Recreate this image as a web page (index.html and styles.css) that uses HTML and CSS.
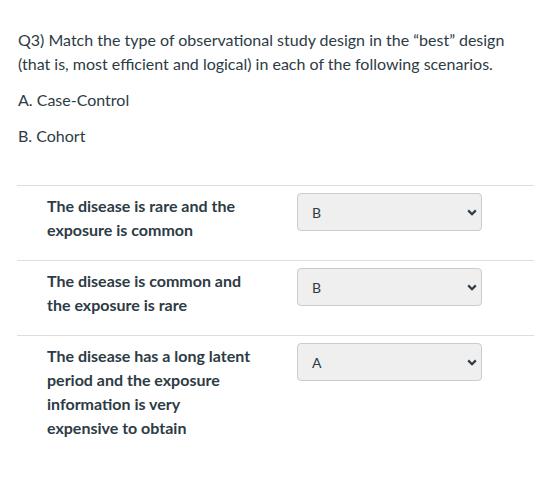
FILE: index.html
```html
<!DOCTYPE html>
<html lang="en">
<head>
<meta charset="utf-8">
<title>Q3</title>
<link rel="stylesheet" href="styles.css">
</head>
<body>
<div class="question">
  <div class="prompt">
    <p>Q3) Match the type of observational study design in the “best” design (that is, most efficient and logical) in each of the following scenarios.</p>
    <p>A. Case-Control</p>
    <p>B. Cohort</p>
  </div>
  <div class="answers">
    <div class="row">
      <div class="label">The disease is rare and the exposure is common</div>
      <div class="select-wrap">
        <select class="select"><option>B</option></select>
        <svg class="chev" width="10" height="7" viewBox="0 0 10 7"><path d="M1.2 1.4 L5 5.2 L8.8 1.4" fill="none" stroke="#2d3b45" stroke-width="2.2"/></svg>
      </div>
    </div>
    <div class="row">
      <div class="label">The disease is common and the exposure is rare</div>
      <div class="select-wrap">
        <select class="select"><option>B</option></select>
        <svg class="chev" width="10" height="7" viewBox="0 0 10 7"><path d="M1.2 1.4 L5 5.2 L8.8 1.4" fill="none" stroke="#2d3b45" stroke-width="2.2"/></svg>
      </div>
    </div>
    <div class="row">
      <div class="label">The disease has a long latent period and the exposure information is very expensive to obtain</div>
      <div class="select-wrap">
        <select class="select"><option>A</option></select>
        <svg class="chev" width="10" height="7" viewBox="0 0 10 7"><path d="M1.2 1.4 L5 5.2 L8.8 1.4" fill="none" stroke="#2d3b45" stroke-width="2.2"/></svg>
      </div>
    </div>
  </div>
</div>
</body>
</html>
```
FILE: styles.css
```css
html, body {
  margin: 0;
  padding: 0;
  background: #ffffff;
}
body {
  font-family: Lato, "Liberation Sans", sans-serif;
  color: #2d3b45;
  font-size: 16px;
  line-height: 24px;
}
.question {
  padding: 28px 15px 0 18px;
}
.prompt p {
  margin: 0 0 12px 0;
}
.answers {
  margin-top: 37px;
}
.row {
  display: flex;
  align-items: flex-start;
  border-top: 1px solid #dcdfe2;
  padding: 7px 0 18px 30px;
  margin-left: -1px;
}
.label {
  width: 205px;
  font-weight: bold;
  padding-top: 1px;
  flex: none;
}
.select-wrap {
  position: relative;
  margin-left: 45px;
  width: 185px;
  height: 38px;
}
.select {
  appearance: none;
  -webkit-appearance: none;
  box-sizing: border-box;
  width: 185px;
  height: 38px;
  margin: 0;
  padding: 0 0 0 14px;
  border: 1px solid #c7cdd1;
  border-radius: 4px;
  background: #efefef;
  font-family: Lato, "Liberation Sans", sans-serif;
  font-size: 14px;
  color: #2d3b45;
}
.chev {
  position: absolute;
  right: 5px;
  top: 16px;
  pointer-events: none;
}
```
